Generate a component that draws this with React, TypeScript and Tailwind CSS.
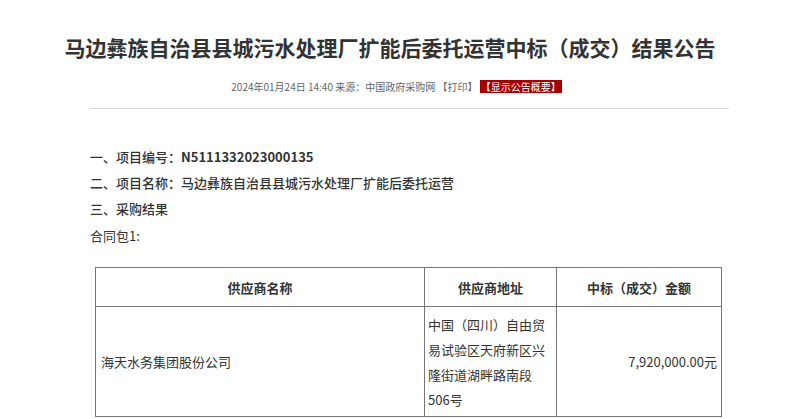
import React from 'react';

const ITEMS = [
  { label: '一、项目编号：', value: 'N5111332023000135', bold: true },
  { label: '二、项目名称：', value: '马边彝族自治县县城污水处理厂扩能后委托运营', bold: false },
  { label: '三、采购结果', value: '', bold: false },
];

export default function App() {
  return (
    <div className="w-[793px] h-[419px] overflow-hidden bg-white text-[#333] font-['Microsoft_YaHei','Noto_Sans_CJK_SC',sans-serif]">
      {/* 标题 */}
      <h1 className="pt-[34px] pr-[13px] text-center text-[21px] font-bold leading-[26px] text-[#333]">
        马边彝族自治县县城污水处理厂扩能后委托运营中标（成交）结果公告
      </h1>

      {/* 发布信息 */}
      <div className="mt-[18px] text-center text-[10px] leading-[18px] text-[#666]">
        2024年01月24日 14:40 来源：中国政府采购网 【打印】{' '}
        <span className="inline-block bg-[#a50000] px-[1px] leading-[13px] text-white">【显示公告概要】</span>
      </div>

      <div className="mt-[12px] ml-[89px] h-px w-[640px] bg-[#ddd]" />

      {/* 正文 */}
      <div className="mt-[35px] pl-[90px] text-[13px] leading-[26px]">
        {ITEMS.map((it) => (
          <p key={it.label} className="font-medium">
            {it.label}
            {it.value && <span className={it.bold ? 'font-bold' : 'font-medium'}>{it.value}</span>}
          </p>
        ))}
        <p className="mt-[1px]">合同包1:</p>
      </div>

      <table className="mt-[18px] ml-[95px] w-[627px] border-collapse text-[13px] leading-[25px] text-[#333]">
        <thead>
          <tr className="h-[39px]">
            <th className="w-[329px] border border-[#777] font-semibold">供应商名称</th>
            <th className="w-[132px] border border-[#777] font-semibold">供应商地址</th>
            <th className="border border-[#777] font-semibold">中标（成交）金额</th>
          </tr>
        </thead>
        <tbody>
          <tr className="h-[110px]">
            <td className="border border-[#777] pl-[5px] font-normal">海天水务集团股份公司</td>
            <td className="border border-[#777] pl-[3px] pr-[8px]">中国（四川）自由贸易试验区天府新区兴隆街道湖畔路南段506号</td>
            <td className="border border-[#777] pr-[4px] text-right">7,920,000.00元</td>
          </tr>
        </tbody>
      </table>
    </div>
  );
}
